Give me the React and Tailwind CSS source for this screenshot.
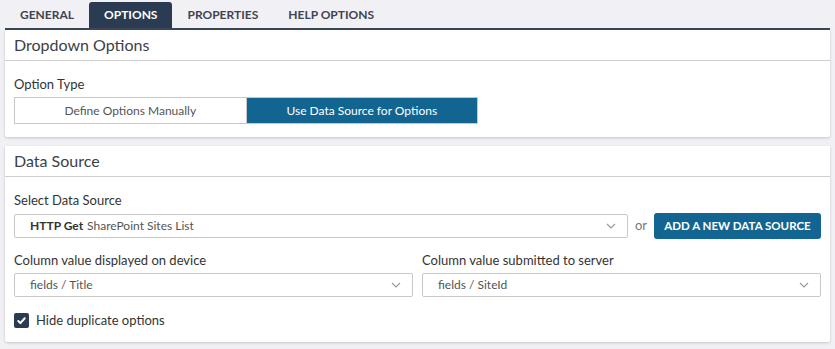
import React from 'react';

const font = { fontFamily: 'Lato, "Open Sans", sans-serif' };

const Chevron = () => (
  <svg className="w-[12px] h-[12px] text-[#9a9a9a] shrink-0" viewBox="0 0 12 12" fill="none" stroke="currentColor" strokeWidth="1.2">
    <path d="M2 4l4 4 4-4" />
  </svg>
);

const Select = ({ children, className = '' }) => (
  <div className={`flex items-center justify-between h-[24px] border border-[#c8c8c8] rounded-[2px] bg-white pl-[15px] pr-[10px] text-[12px] text-[#555] ${className}`}>
    <div className="truncate">{children}</div>
    <Chevron />
  </div>
);

const Card = ({ title, children, className = '' }) => (
  <div className={`bg-white shadow-[0_1px_3px_rgba(0,0,0,0.18)] rounded-b-[2px] ${className}`}>
    <div className="h-[31px] flex items-center px-[9px] border-b border-[#cfcfcf] text-[16px] text-[#3b3f47]">{title}</div>
    {children}
  </div>
);

export default function App() {
  const tabs = ['GENERAL', 'OPTIONS', 'PROPERTIES', 'HELP OPTIONS'];
  return (
    <div className="w-full h-[349px] bg-[#f1f1f5] px-[5px] overflow-hidden" style={font}>
      <div className="flex pt-[2px] border-b-2 border-[#3a4758]">
        {tabs.map((t) => (
          <div
            key={t}
            className={`h-[26px] px-[15px] flex items-center text-[12px] font-bold rounded-t-[3px] ${
              t === 'OPTIONS' ? 'bg-[#2b3b51] text-white' : 'text-[#3e4450]'
            }`}
          >
            {t}
          </div>
        ))}
      </div>

      <Card title="Dropdown Options">
        <div className="px-[9px] pt-[15px] pb-[13px]">
          <div className="text-[13px] text-[#333] leading-[16px] mb-[5px]">Option Type</div>
          <div className="flex w-[464px] h-[27px] border border-[#c8c8c8] text-[12px]">
            <div className="flex-1 flex items-center justify-center text-[#555] bg-white border-r border-[#c8c8c8]">Define Options Manually</div>
            <div className="flex-1 flex items-center justify-center text-white bg-[#136591]">Use Data Source for Options</div>
          </div>
        </div>
      </Card>

      <Card title="Data Source" className="mt-[9px]">
        <div className="px-[9px] pt-[15px] pb-[11px]">
          <div className="text-[13px] text-[#333] leading-[16px] mb-[5px]">Select Data Source</div>
          <div className="flex items-center">
            <Select className="flex-1 min-w-0">
              <span className="font-bold text-[#333]">HTTP Get</span>
              <span className="ml-[4px] text-[#555]">SharePoint Sites List</span>
            </Select>
            <span className="mx-[7px] text-[13px] text-[#777]">or</span>
            <button className="h-[26px] w-[167px] shrink-0 whitespace-nowrap bg-[#136591] text-white text-[11.5px] font-bold rounded-[3px]">
              ADD A NEW DATA SOURCE
            </button>
          </div>
          <div className="flex gap-[9px] mt-[13px]">
            <div className="flex-1">
              <div className="text-[13px] text-[#333] leading-[16px] mb-[5px]">Column value displayed on device</div>
              <Select>fields / Title</Select>
            </div>
            <div className="flex-1">
              <div className="text-[13px] text-[#333] leading-[16px] mb-[5px]">Column value submitted to server</div>
              <Select>fields / SiteId</Select>
            </div>
          </div>
          <div className="flex items-center mt-[14px]">
            <div className="w-[15px] h-[15px] bg-[#2b3b51] rounded-[2px] flex items-center justify-center">
              <svg className="w-[11px] h-[11px]" viewBox="0 0 12 12" fill="none" stroke="white" strokeWidth="2.2" strokeLinecap="round" strokeLinejoin="round">
                <path d="M2.5 6.5l2.3 2.3L9.5 3.5" />
              </svg>
            </div>
            <span className="ml-[7px] text-[13px] text-[#333]">Hide duplicate options</span>
          </div>
        </div>
      </Card>
    </div>
  );
}
